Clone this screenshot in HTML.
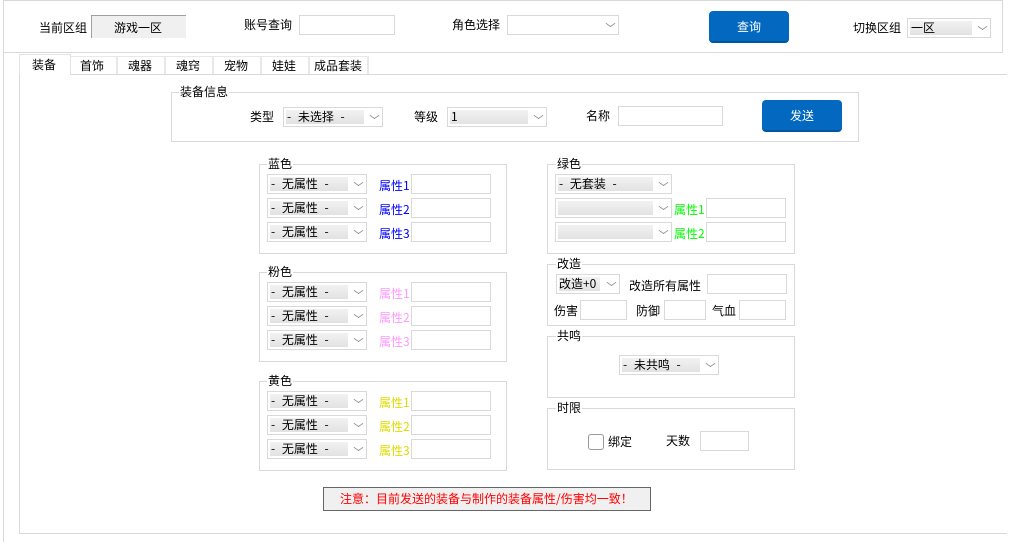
<!DOCTYPE html>
<html lang="zh"><head><meta charset="utf-8"><title>装备</title>
<style>
html,body{margin:0;padding:0;background:#fff}
body{width:1010px;height:542px;position:relative;overflow:hidden;font:12px/14px "WenQuanYi Zen Hei","Noto Sans CJK SC",sans-serif;color:#000}
div,span{position:absolute;box-sizing:border-box}
.t{white-space:nowrap;height:14px}
.l{background:#d9d9d9}
.g{border:1px solid #d9d9d9}
.n{background:#fff;padding:0 1px;white-space:nowrap;height:14px}
.s{border:1px solid #d9d9d9;background:#fff;height:20px;width:100px}
.s i{position:absolute;left:2px;top:2px;height:14px;width:77px;background:linear-gradient(#f2f2f2,#e2e2e2);font-style:normal;white-space:pre;line-height:14px;padding-left:1px;word-spacing:4px}
.s::after{content:"";position:absolute;right:4px;top:4px;width:6px;height:6px;border-right:1px solid #8c8c8c;border-bottom:1px solid #8c8c8c;transform:scaleY(.7) rotate(45deg)}
.btn{background:#0368c0;border-bottom:2px solid #02549c;border-radius:4px;color:#fff;width:80px;height:32px;text-align:center;line-height:32px}
.i{border:1px solid #d9d9d9;background:#fff;height:20px;width:80px}
.tb{top:56px;height:18px;border-top:1px solid #e8e8e8;border-right:2px solid #e8e8e8;line-height:18px;white-space:nowrap;padding-left:10px}
.bl{color:#0000ff}.pk{color:#ff99ff}.ye{color:#dcdc00}.gr{color:#00ff00}
</style></head><body>
<!-- frame -->
<div class="l" style="left:3px;top:0;width:999px;height:1px"></div>
<div class="l" style="left:3px;top:0;width:1px;height:542px"></div>
<div class="l" style="left:1002px;top:0;width:1px;height:53px"></div>
<div class="l" style="left:3px;top:52px;width:1000px;height:1px"></div>
<!-- top bar -->
<div class="t" style="left:39px;top:21px">当前区组</div>
<div style="left:91px;top:15px;width:95px;height:23px;background:#f0f0f0;border-top:1px solid #a0a0a0;border-left:1px solid #a0a0a0"></div>
<div class="t" style="left:114px;top:21px">游戏一区</div>
<div class="t" style="left:244px;top:18px">账号查询</div>
<div class="i" style="left:299px;top:15px;width:96px"></div>
<div class="t" style="left:452px;top:18px">角色选择</div>
<div class="s" style="left:507px;top:15px;width:112px"></div>
<div class="btn" style="left:709px;top:11px">查询</div>
<div class="t" style="left:853px;top:21px">切换区组</div>
<div class="s" style="left:907px;top:18px;width:84px"><i style="width:61px">一区</i></div>
<!-- tabs -->
<div class="l" style="left:19px;top:74px;width:988px;height:1px"></div>
<div class="l" style="left:19px;top:75px;width:1px;height:459px"></div>
<div class="l" style="left:19px;top:533px;width:988px;height:1px"></div>
<div class="tb" style="left:71px;width:47px;padding-left:9px">首饰</div>
<div class="tb" style="left:118px;width:48px">魂器</div>
<div class="tb" style="left:166px;width:48px">魂窍</div>
<div class="tb" style="left:214px;width:48px">宠物</div>
<div class="tb" style="left:262px;width:48px">娃娃</div>
<div class="tb" style="left:310px;width:59px;padding-left:4px">成品套装</div>
<div class="t" style="left:19px;top:54px;width:52px;height:21px;border:1px solid #e3e3e3;border-bottom:0;background:#fff;padding-left:12px;line-height:19px">装备</div>
<!-- 装备信息 -->
<div class="g" style="left:171px;top:92px;width:688px;height:50px"></div>
<div class="n" style="left:179px;top:85px">装备信息</div>
<div class="t" style="left:250px;top:110px">类型</div>
<div class="s" style="left:283px;top:107px"><i>- 未选择 -</i></div>
<div class="t" style="left:414px;top:110px">等级</div>
<div class="s" style="left:447px;top:107px"><i>1</i></div>
<div class="t" style="left:586px;top:109px">名称</div>
<div class="i" style="left:618px;top:106px;width:105px"></div>
<div class="btn" style="left:762px;top:100px">发送</div>
<!-- 蓝色 -->
<div class="g" style="left:259px;top:164px;width:248px;height:90px"></div>
<div class="n" style="left:267px;top:157px">蓝色</div>
<div class="s" style="left:267px;top:174px"><i>- 无属性 -</i></div>
<div class="s" style="left:267px;top:198px"><i>- 无属性 -</i></div>
<div class="s" style="left:267px;top:222px"><i>- 无属性 -</i></div>
<div class="t bl" style="left:379px;top:179px">属性1</div>
<div class="t bl" style="left:379px;top:203px">属性2</div>
<div class="t bl" style="left:379px;top:227px">属性3</div>
<div class="i" style="left:411px;top:174px"></div>
<div class="i" style="left:411px;top:198px"></div>
<div class="i" style="left:411px;top:222px"></div>
<!-- 粉色 -->
<div class="g" style="left:259px;top:272px;width:248px;height:90px"></div>
<div class="n" style="left:267px;top:265px">粉色</div>
<div class="s" style="left:267px;top:282px"><i>- 无属性 -</i></div>
<div class="s" style="left:267px;top:306px"><i>- 无属性 -</i></div>
<div class="s" style="left:267px;top:330px"><i>- 无属性 -</i></div>
<div class="t pk" style="left:379px;top:287px">属性1</div>
<div class="t pk" style="left:379px;top:311px">属性2</div>
<div class="t pk" style="left:379px;top:335px">属性3</div>
<div class="i" style="left:411px;top:282px"></div>
<div class="i" style="left:411px;top:306px"></div>
<div class="i" style="left:411px;top:330px"></div>
<!-- 黄色 -->
<div class="g" style="left:259px;top:381px;width:248px;height:90px"></div>
<div class="n" style="left:267px;top:374px">黄色</div>
<div class="s" style="left:267px;top:391px"><i>- 无属性 -</i></div>
<div class="s" style="left:267px;top:415px"><i>- 无属性 -</i></div>
<div class="s" style="left:267px;top:439px"><i>- 无属性 -</i></div>
<div class="t ye" style="left:379px;top:396px">属性1</div>
<div class="t ye" style="left:379px;top:420px">属性2</div>
<div class="t ye" style="left:379px;top:444px">属性3</div>
<div class="i" style="left:411px;top:391px"></div>
<div class="i" style="left:411px;top:415px"></div>
<div class="i" style="left:411px;top:439px"></div>
<!-- 绿色 -->
<div class="g" style="left:547px;top:164px;width:248px;height:90px"></div>
<div class="n" style="left:556px;top:157px">绿色</div>
<div class="s" style="left:555px;top:174px;width:117px"><i style="width:94px">- 无套装 -</i></div>
<div class="s" style="left:555px;top:198px;width:117px"><i style="width:94px"></i></div>
<div class="s" style="left:555px;top:222px;width:117px"><i style="width:94px"></i></div>
<div class="t gr" style="left:674px;top:203px">属性1</div>
<div class="t gr" style="left:674px;top:227px">属性2</div>
<div class="i" style="left:706px;top:198px"></div>
<div class="i" style="left:706px;top:222px"></div>
<!-- 改造 -->
<div class="g" style="left:547px;top:264px;width:248px;height:62px"></div>
<div class="n" style="left:556px;top:257px">改造</div>
<div class="s" style="left:556px;top:274px;width:64px"><i style="width:41px;padding-left:0">改造+0</i></div>
<div class="t" style="left:629px;top:279px">改造所有属性</div>
<div class="i" style="left:707px;top:274px"></div>
<div class="t" style="left:554px;top:304px">伤害</div>
<div class="i" style="left:580px;top:300px;width:47px"></div>
<div class="t" style="left:636px;top:304px">防御</div>
<div class="i" style="left:664px;top:300px;width:42px"></div>
<div class="t" style="left:712px;top:304px">气血</div>
<div class="i" style="left:739px;top:300px;width:47px"></div>
<!-- 共鸣 -->
<div class="g" style="left:547px;top:336px;width:248px;height:62px"></div>
<div class="n" style="left:556px;top:329px">共鸣</div>
<div class="s" style="left:619px;top:355px"><i>- 未共鸣 -</i></div>
<!-- 时限 -->
<div class="g" style="left:547px;top:408px;width:248px;height:62px"></div>
<div class="n" style="left:556px;top:401px">时限</div>
<div style="left:588px;top:434px;width:16px;height:16px;border:1px solid #999;border-radius:3px;background:#fff"></div>
<div class="t" style="left:608px;top:435px">绑定</div>
<div class="t" style="left:666px;top:434px">天数</div>
<div class="i" style="left:700px;top:431px;width:49px"></div>
<!-- notice -->
<div style="left:323px;top:487px;width:328px;height:24px;border:1px solid #666;background:#f0f0f0"></div>
<div class="t" style="left:340px;top:492px;color:#ff0000">注意：目前发送的装备与制作的装备属性/伤害均一致！</div>
</body></html>
